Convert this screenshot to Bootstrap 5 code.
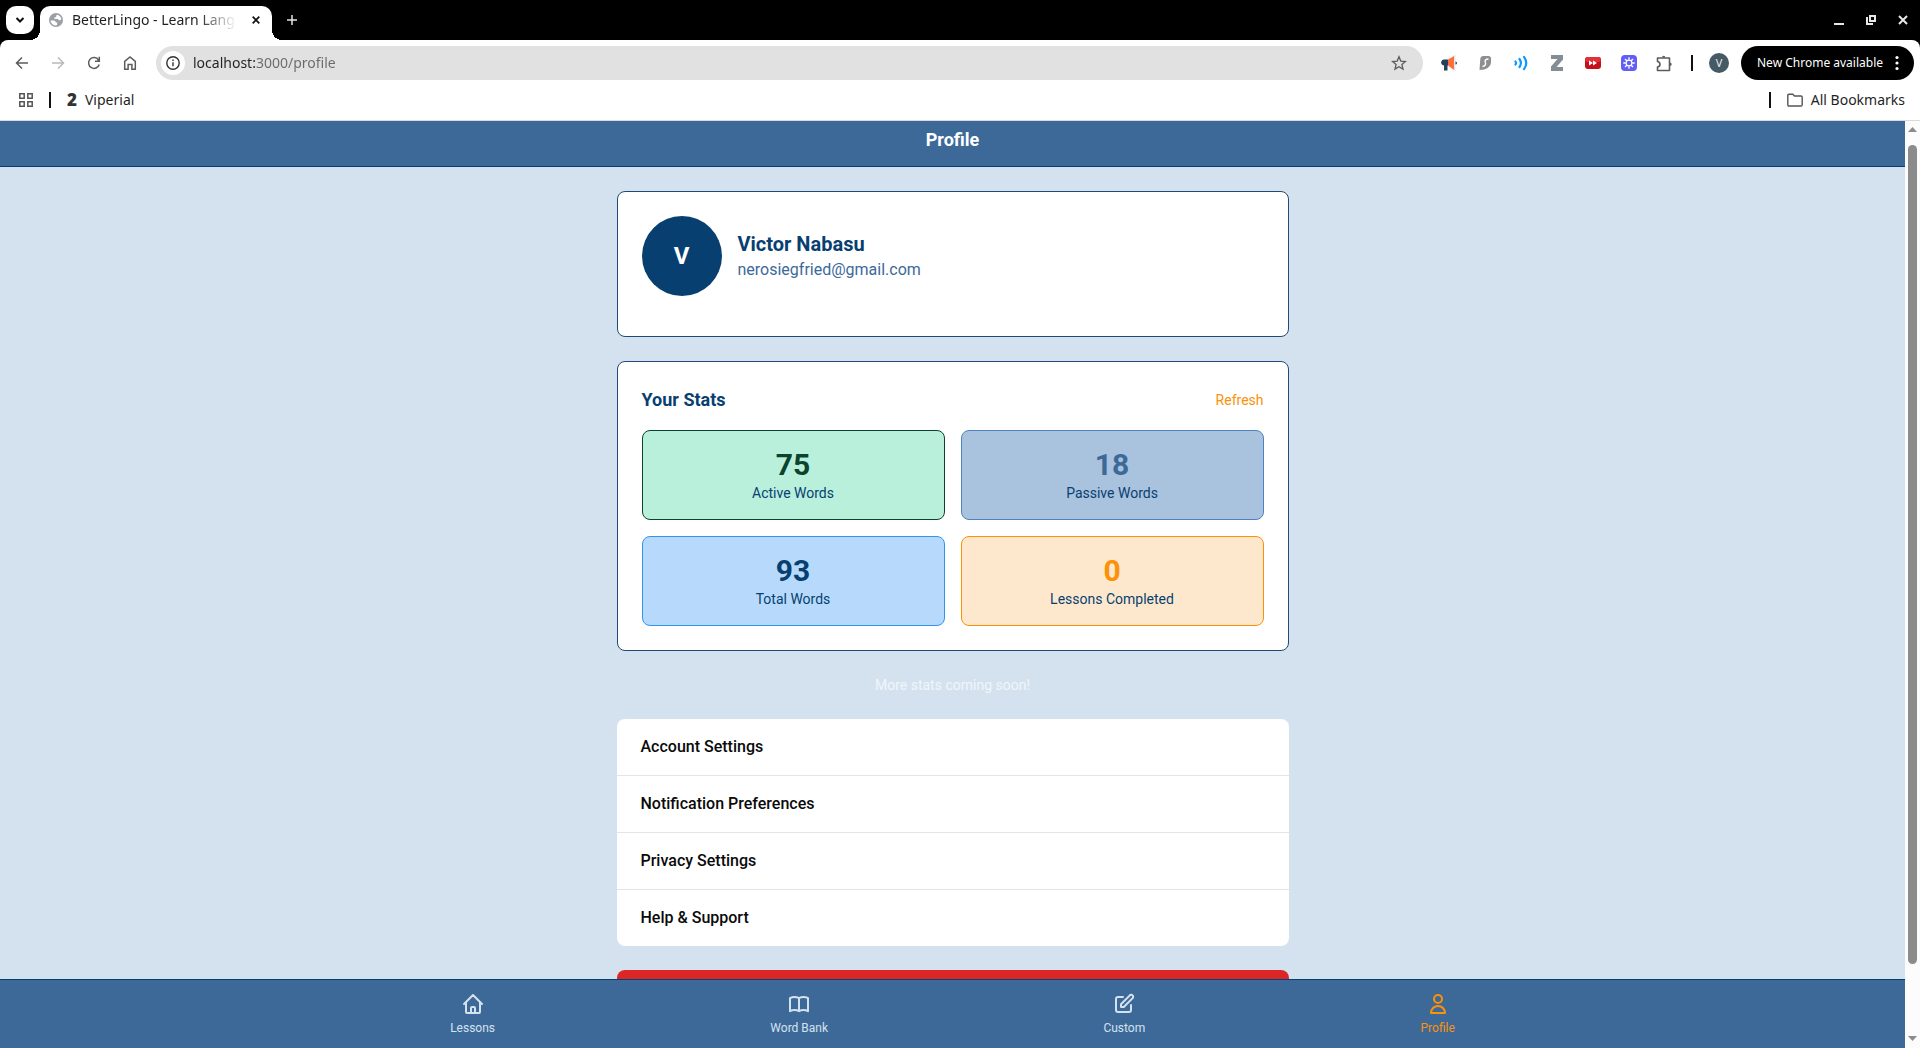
<!DOCTYPE html>
<html lang="en">
<head>
<meta charset="utf-8">
<meta name="viewport" content="width=device-width, initial-scale=1">
<title>BetterLingo - Learn Languages</title>
<link href="https://cdn.jsdelivr.net/npm/bootstrap@5.3.0/dist/css/bootstrap.min.css" rel="stylesheet">
<style>
:root{--blue:#3d6999;--navy:#083f71;--edge:#1f4a75;--sky:#d4e2ef;--orange:#fb9107}
body{font-family:Roboto,"Liberation Sans",sans-serif;color:#0a0a0a;background:#fff}
button,input{font-family:inherit}
svg{display:block;flex:none}
.plain{border:0;background:none;padding:0;color:inherit}
/* browser frame */
.chrome-ui{font-family:"Noto Sans","Open Sans",sans-serif;font-size:14px;line-height:20px;color:#1f1f1f}
.tabstrip{height:40px;background:#000;padding:6px 1px 0 6px}
.tab-search{width:28px;height:28px;border-radius:10px;background:#fff;margin-right:6px}
.browser-tab{width:232px;height:34px;background:#fff;border-radius:10px 10px 0 0;padding:0 12px 6px 9px;position:relative}
.browser-tab::before,.browser-tab::after{content:"";position:absolute;bottom:0;width:10px;height:10px}
.browser-tab::before{left:-10px;background:radial-gradient(circle at 0 0,transparent 10px,#fff 10px)}
.browser-tab::after{right:-10px;background:radial-gradient(circle at 100% 0,transparent 10px,#fff 10px)}
.tab-name{width:168px;margin-left:9px;font-size:14px;-webkit-mask-image:linear-gradient(90deg,#000 75%,transparent 98%);mask-image:linear-gradient(90deg,#000 75%,transparent 98%)}
.new-tab{width:40px;height:28px;color:#e3e3e3}
.win-btn{width:32px;height:28px;color:#e8e8e8}
.shoulders{background:#000}
.toolbar{height:46px;padding:0 6px 0 4px;background:#fff;border-radius:8px 8px 0 0}
.tool{width:36px;height:34px;color:#5c5c5c}
.tool:disabled{color:#b9b9b9}
.omnibox{height:34px;border-radius:17px;background:#e1e1e1;margin:0 8px;padding:0 6px 0 5px}
.site-info{width:24px;height:24px;border-radius:50%;background:#fff;color:#333;margin-right:8px}
.url{border:0;outline:0;padding:0 0 2px;height:24px;font-size:14px;color:transparent;background:linear-gradient(90deg,#222 63px,#6a6a6a 63px);-webkit-background-clip:text;background-clip:text}
.bar{width:2px;height:16px;background:#111}
.avatar-sm{width:20px;height:20px;border-radius:50%;background:#455a64;color:#e8eef0;font-size:11px;line-height:20px}
.update{height:34px;border-radius:17px;background:#000;color:#fff;font-size:12px;padding:0 15px 0 16px;margin-left:4px;gap:12px}
.bookmarks{height:35px;background:#fff;border-bottom:1px solid #dadada;padding:0 15px 6px 19px}
.two{font-size:17px;font-weight:900;line-height:18px;color:#333}
/* page */
.viewport{background:var(--sky)}
.topbar{background:var(--blue);border-bottom:1px solid var(--navy);padding:5px 0 12px}
.topbar h1{font-size:18px;line-height:28px;font-weight:700;color:#fff}
.column{width:100%;max-width:672px;padding-top:24px;gap:24px}
.panel{background:#fff;border:1px solid var(--edge);border-radius:8px;padding:24px}
.profile-panel{padding-bottom:40px}
.avatar-lg{width:80px;height:80px;border-radius:50%;background:var(--navy);color:#fff;font-size:24px;font-weight:700}
.person{font-size:20px;line-height:28px;font-weight:700;color:var(--navy)}
.email{line-height:24px;color:var(--blue)}
.panel h2{font-size:18px;line-height:28px;font-weight:700;color:var(--navy)}
.t14{font-size:14px;line-height:20px}
.refresh{color:var(--orange)}
.stat{border:1px solid;border-radius:8px;padding:16px;text-align:center}
.stat strong{display:block;font-size:30px;line-height:36px;font-weight:700}
.stat span{display:block;font-size:14px;line-height:20px;color:var(--navy)}
.s-green{background:#b8f0dc;border-color:#0c432c}.s-green strong{color:#0c432c}
.s-blue{background:#a9c2dd;border-color:#4d84bf}.s-blue strong{color:var(--blue)}
.s-sky{background:#b7dafc;border-color:#3194ed}.s-sky strong{color:var(--navy)}
.s-amber{background:#fee8cd;border-color:var(--orange)}.s-amber strong{color:var(--orange)}
.soon{color:#f0f5fa}
.menu{border-radius:8px;overflow:hidden;background:#fff}
.menu a{display:block;padding:16px 24px;line-height:24px;font-weight:500;color:#0a0a0a;text-decoration:none}
.menu a+a{border-top:1px solid #e5e5e5}
.logout{background:#dc2626;border-radius:8px;height:48px;border:0}
.tabbar{background:var(--blue);border-top:1px solid var(--navy)}
.tabbar-in{max-width:1280px;padding:12px 0}
.tabbar a{color:#d4e2ef;text-decoration:none;font-size:12px;line-height:16px;gap:4px}
.tabbar a.current{color:var(--orange)}
.scroll{width:15px;background:#fcfcfc;padding:6px 0 7px;color:#8b8b8b}
.thumb{width:9px;border-radius:5px;background:#8b8b8b;flex:819 0 0;margin-top:13px}
.rest{flex:72 0 0}
</style>
</head>
<body class="d-flex flex-column vh-100 overflow-hidden">
<header class="chrome-ui flex-shrink-0">
  <div class="tabstrip d-flex">
    <button class="plain tab-search d-flex align-items-center justify-content-center" aria-label="Search tabs"><svg width="10" height="8" viewBox="0 0 10 8" fill="none" stroke="#111" stroke-width="2"><path d="M1.5 2 5 5.5 8.500 2"/></svg></button>
    <div class="browser-tab d-flex align-items-center">
      <svg width="14" height="14" viewBox="0 0 14 14"><circle cx="7" cy="7" r="7" fill="#9aa0a6"/><path d="M1.500 7.500h3.200c1.300 0 2 .8 2 2h1.500v2.200c-.4.500-1 .8-1.700.9C3.600 12.300 1.600 10 1.500 7.500zM8.500 1.700c2 .6 3.600 2.400 3.900 4.600-.8.900-1.800 1.200-2.600.7-.6-.4-.8-1-1.800-1H5.500V4.300h1.700V2.600z" fill="#fff"/></svg>
      <span class="tab-name text-nowrap">BetterLingo - Learn Lang</span>
      <button class="plain ms-auto" aria-label="Close tab"><svg width="8" height="8" viewBox="0 0 8 8" stroke="#111" stroke-width="1.700"><path d="M.7.7l6.600 6.600M7.300.7.7 7.300"/></svg></button>
    </div>
    <button class="plain new-tab d-flex align-items-center justify-content-center" aria-label="New tab"><svg width="10" height="10" viewBox="0 0 10 10" stroke="currentColor" stroke-width="1.500"><path d="M5 0v10M0 5h10"/></svg></button>
    <div class="d-flex ms-auto">
      <button class="plain win-btn d-flex align-items-center justify-content-center" aria-label="Minimize"><svg width="10" height="10" viewBox="0 0 10 10" fill="currentColor"><path d="M0 8h10v2H0z"/></svg></button>
      <button class="plain win-btn d-flex align-items-center justify-content-center" aria-label="Restore"><svg width="10" height="10" viewBox="0 0 10 10" fill="none" stroke="currentColor" stroke-width="2"><path d="M4 1h5v5H4zM1 2v7h6"/></svg></button>
      <button class="plain win-btn d-flex align-items-center justify-content-center" aria-label="Close"><svg width="10" height="10" viewBox="0 0 10 10" stroke="currentColor" stroke-width="2"><path d="M1 1l8 8M9 1 1 9"/></svg></button>
    </div>
  </div>
  <div class="shoulders">
  <div class="toolbar d-flex align-items-center">
    <button class="plain tool d-flex align-items-center justify-content-center" aria-label="Back"><svg width="14" height="14" viewBox="0 0 14 14" fill="none" stroke="currentColor" stroke-width="1.500"><path d="M13 7H2M7 1.500 1.500 7 7 12.500"/></svg></button>
    <button class="plain tool d-flex align-items-center justify-content-center" aria-label="Forward" disabled><svg width="14" height="14" viewBox="0 0 14 14" fill="none" stroke="currentColor" stroke-width="1.500"><path d="M1 7h11M7 1.500 12.500 7 7 12.500"/></svg></button>
    <button class="plain tool d-flex align-items-center justify-content-center" aria-label="Reload"><svg width="14" height="14" viewBox="0 0 14 14" fill="none" stroke="currentColor" stroke-width="1.500"><path d="M12.200 8.500A5.400 5.400 0 1 1 11.500 4l.8 1M12.300.8v4.400H8"/></svg></button>
    <button class="plain tool d-flex align-items-center justify-content-center" aria-label="Home"><svg width="14" height="14" viewBox="0 0 14 14" fill="none" stroke="currentColor" stroke-width="1.500"><path d="M1.700 13.200V5.300L7 1l5.300 4.300v7.900H8.900V8.500H5.100v4.700z"/></svg></button>
    <div class="omnibox d-flex align-items-center flex-grow-1">
      <button class="plain site-info d-flex align-items-center justify-content-center" aria-label="Site information"><svg width="14" height="14" viewBox="0 0 14 14" fill="none" stroke="currentColor" stroke-width="1.400"><circle cx="7" cy="7" r="6.200"/><path d="M7 6.200v4M7 3.600v1.500"/></svg></button>
      <input class="url flex-grow-1" type="text" value="localhost:3000/profile" aria-label="Address">
      <button class="plain tool d-flex align-items-center justify-content-center" aria-label="Bookmark this page"><svg width="16" height="16" viewBox="0 0 16 16" fill="none" stroke="currentColor" stroke-width="1.300"><path d="M8 1.800l1.800 4.300 4.600.4-3.500 3 1.100 4.600L8 11.700l-4 2.400 1.100-4.600-3.500-3 4.600-.4z"/></svg></button>
    </div>
    <button class="plain tool d-flex align-items-center justify-content-center" aria-label="Megaphone extension"><svg width="16" height="16" viewBox="0 0 16 16"><path d="M7 4.500H3a3 3 0 0 0-1.500 5.500L3 10.500v5h3.500v-5H7z" fill="#24405a"/><path d="M7 4.500l6-3.500v14l-6-4.500z" fill="#ff6f3c"/><path d="M13 0h1.500v16H13z" fill="#e8e8ec"/><path d="M14.500 6.500a1.500 1.500 0 0 1 0 3z" fill="#24405a"/></svg></button>
    <button class="plain tool d-flex align-items-center justify-content-center" aria-label="Notes extension"><svg width="16" height="16" viewBox="0 0 16 16"><path d="M6.500 1h5a2.500 2.500 0 0 1 2.500 2.500V7c0 4.500-4.500 8-11.500 8L3.300 4A3.200 3.200 0 0 1 6.500 1z" fill="#8e8e92"/><path d="M11.500 4C8.500 4 7.500 5.500 8.300 7.300S8.500 11 5.500 11.500" fill="none" stroke="#fff" stroke-width="1.400"/></svg></button>
    <button class="plain tool d-flex align-items-center justify-content-center" aria-label="Read aloud extension"><svg width="16" height="16" viewBox="0 0 16 16" fill="none" stroke="#0d99ff" stroke-width="2.200" stroke-linecap="round"><path d="M2.500 6.500q1 1.500 0 3M6.500 4q2.800 4 0 8M11 1.800q4.500 6.200 0 12.400"/></svg></button>
    <button class="plain tool d-flex align-items-center justify-content-center" aria-label="Zotero extension"><svg width="14" height="16" viewBox="0 0 14 16"><path d="M1 0h12v4.500L6.500 12H13v4H1v-4.500L7.500 4H1z" fill="#848c94"/></svg></button>
    <button class="plain tool d-flex align-items-center justify-content-center" aria-label="Video speed extension"><svg width="16" height="14" viewBox="0 0 16 14"><rect y="1" width="16" height="12" rx="3" fill="#c4101a"/><rect y="1" width="16" height="5" rx="2.500" fill="#e0303a"/><path d="M4 4.500 8 7l-4 2.500zM8 4.500 12 7 8 9.500z" fill="#fff"/></svg></button>
    <button class="plain tool d-flex align-items-center justify-content-center" aria-label="Loom extension"><svg width="16" height="16" viewBox="0 0 16 16"><rect width="16" height="16" rx="4" fill="#625df5"/><circle cx="8" cy="8" r="2.900" fill="none" stroke="#fff" stroke-width="1.200"/><path d="M8 2.300v2.500M8 11.200v2.500M2.300 8h2.500M11.200 8h2.500M4 4l1.800 1.800M10.200 10.200 12 12M12 4l-1.800 1.800M5.800 10.200 4 12" stroke="#fff" stroke-width="1.300"/></svg></button>
    <button class="plain tool d-flex align-items-center justify-content-center" aria-label="Extensions"><svg width="17" height="17" viewBox="0 0 17 17" fill="none" stroke="currentColor" stroke-width="1.600" stroke-linejoin="round"><path d="M1.500 3H13.500V15.500H1.500V12q2.500-.3 2.500-2.700T1.500 6.500z"/><path d="M6 2.500a1.700 1.700 0 0 1 3.400 0zM14 7.500a1.700 1.700 0 0 1 0 3.400z" fill="currentColor" stroke="none"/></svg></button>
    <div class="bar mx-2"></div>
    <button class="plain tool d-flex align-items-center justify-content-center" aria-label="Profile V"><span class="avatar-sm">V</span></button>
    <button class="plain update d-flex align-items-center text-nowrap">New Chrome available<svg width="4" height="16" viewBox="0 0 4 16" fill="currentColor"><circle cx="2" cy="2.500" r="1.600"/><circle cx="2" cy="8" r="1.600"/><circle cx="2" cy="13.500" r="1.600"/></svg></button>
  </div>
  </div>
  <nav class="bookmarks d-flex align-items-center" aria-label="Bookmarks">
    <button class="plain" aria-label="Apps"><svg width="14" height="14" viewBox="0 0 14 14" fill="none" stroke="#555" stroke-width="1.500"><path d="M.8.8h4.400v4.400H.8zM8.800.8h4.400v4.400H8.800zM.8 8.800h4.400v4.400H.8zM8.800 8.800h4.400v4.400H8.800z"/></svg></button>
    <div class="bar mx-3"></div>
    <a href="#" class="d-flex align-items-center gap-2 text-reset text-decoration-none"><span class="two">2</span>Viperial</a>
    <div class="bar ms-auto me-3"></div>
    <a href="#" class="d-flex align-items-center gap-2 text-reset text-decoration-none"><svg width="16" height="14" viewBox="0 0 16 14" fill="none" stroke="#555" stroke-width="1.400"><path d="M.8 2.500q0-1.200 1.200-1.200h3.800L7.500 3H14q1.200 0 1.200 1.200v7.600q0 1.200-1.200 1.200H2Q.8 13 .8 11.800z"/></svg>All Bookmarks</a>
  </nav>
</header>

<div class="d-flex flex-grow-1 overflow-hidden">
  <div class="viewport d-flex flex-column flex-grow-1 overflow-hidden">
    <div class="topbar text-center flex-shrink-0"><h1 class="m-0">Profile</h1></div>
    <main class="flex-grow-1 overflow-hidden">
      <div class="column mx-auto d-flex flex-column">
        <section class="panel profile-panel d-flex align-items-center gap-3">
          <div class="avatar-lg d-flex align-items-center justify-content-center">V</div>
          <div><div class="person">Victor Nabasu</div><div class="email">nerosiegfried@gmail.com</div></div>
        </section>
        <section class="panel">
          <div class="d-flex justify-content-between align-items-center mb-3">
            <h2 class="m-0">Your Stats</h2>
            <button class="plain refresh t14">Refresh</button>
          </div>
          <div class="row row-cols-2 g-3">
            <div class="col"><div class="stat s-green"><strong>75</strong><span>Active Words</span></div></div>
            <div class="col"><div class="stat s-blue"><strong>18</strong><span>Passive Words</span></div></div>
            <div class="col"><div class="stat s-sky"><strong>93</strong><span>Total Words</span></div></div>
            <div class="col"><div class="stat s-amber"><strong>0</strong><span>Lessons Completed</span></div></div>
          </div>
        </section>
        <p class="soon t14 text-center m-0">More stats coming soon!</p>
        <nav class="menu" aria-label="Settings">
          <a href="#">Account Settings</a>
          <a href="#">Notification Preferences</a>
          <a href="#">Privacy Settings</a>
          <a href="#">Help &amp; Support</a>
        </nav>
        <button class="logout w-100" aria-label="Log out"></button>
      </div>
    </main>
    <nav class="tabbar flex-shrink-0" aria-label="Main">
      <div class="tabbar-in mx-auto d-flex justify-content-around">
        <a href="#" class="d-flex flex-column align-items-center"><svg width="24" height="24" viewBox="0 0 24 24" fill="none" stroke="currentColor" stroke-width="2" stroke-linecap="round" stroke-linejoin="round"><path d="M3 12l9-9 9 9M5 10.500V20a1 1 0 0 0 1 1h12a1 1 0 0 0 1-1v-9.500M10 20.500V16a1 1 0 0 1 1-1h2a1 1 0 0 1 1 1v4.500"/></svg>Lessons</a>
        <a href="#" class="d-flex flex-column align-items-center"><svg width="24" height="24" viewBox="0 0 24 24" fill="none" stroke="currentColor" stroke-width="2" stroke-linecap="round" stroke-linejoin="round"><path d="M12 6.200v13M12 6.200C10.800 5.500 9.200 5 7.500 5S4.200 5.500 3 6.200v13c1.200-.7 2.800-1.200 4.500-1.200s3.300.5 4.500 1.200c1.200-.7 2.800-1.200 4.500-1.200s3.300.5 4.500 1.200v-13C19.800 5.500 18.200 5 16.500 5s-3.300.5-4.500 1.200"/></svg>Word Bank</a>
        <a href="#" class="d-flex flex-column align-items-center"><svg width="24" height="24" viewBox="0 0 24 24" fill="none" stroke="currentColor" stroke-width="2" stroke-linecap="round" stroke-linejoin="round"><path d="M11 5H6a2 2 0 0 0-2 2v11a2 2 0 0 0 2 2h11a2 2 0 0 0 2-2v-5m-1.400-9.400a2 2 0 1 1 2.800 2.800L11.800 15H9v-2.800l8.600-8.600z"/></svg>Custom</a>
        <a href="#" class="current d-flex flex-column align-items-center" aria-current="page"><svg width="24" height="24" viewBox="0 0 24 24" fill="none" stroke="currentColor" stroke-width="2" stroke-linejoin="round"><path d="M16 7a4 4 0 1 1-8 0 4 4 0 0 1 8 0zM12 14a7 7 0 0 0-7 7h14a7 7 0 0 0-7-7z"/></svg>Profile</a>
      </div>
    </nav>
  </div>
  <div class="scroll d-flex flex-column align-items-center flex-shrink-0" aria-hidden="true">
    <svg width="9" height="5" viewBox="0 0 9 5" fill="currentColor"><path d="M4.500 0 9 5H0z"/></svg>
    <div class="thumb"></div><div class="rest"></div>
    <svg width="9" height="5" viewBox="0 0 9 5" fill="currentColor"><path d="M4.500 5 9 0H0z"/></svg>
  </div>
</div>
<script src="https://cdn.jsdelivr.net/npm/bootstrap@5.3.0/dist/js/bootstrap.bundle.min.js"></script>
</body>
</html>
